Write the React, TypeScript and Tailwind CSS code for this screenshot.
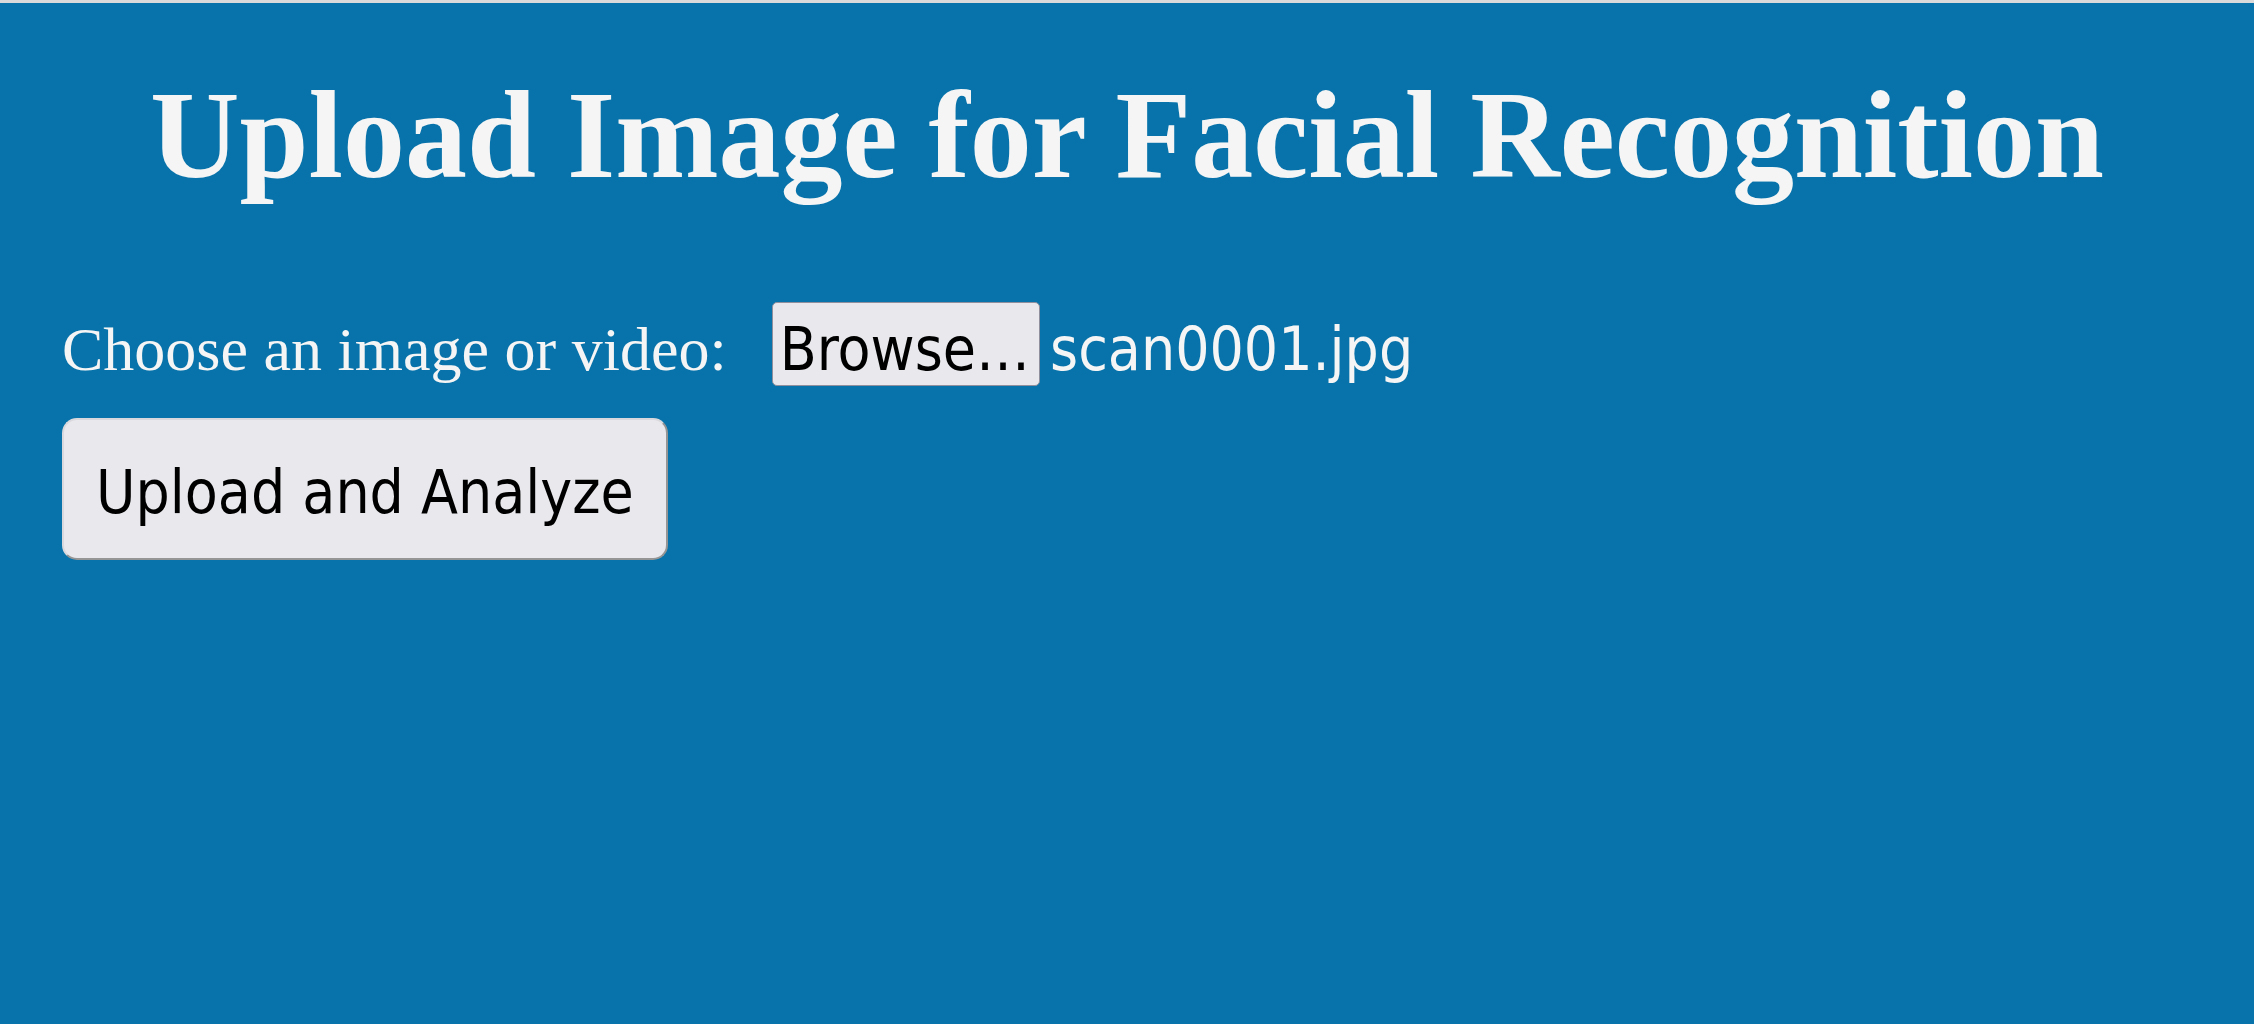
const UploadPage = () => {
  return (
    <div className="min-h-[1024px] w-full bg-[#0873aa]">
      <div className="h-[3px] bg-[#dadada]" />
      <h1 className="mt-[71px] text-center font-['Liberation_Serif',serif] text-[124px] font-bold leading-none text-[#f5f5f5]">
        Upload Image for Facial Recognition
      </h1>

      <form className="pl-[62px]" onSubmit={(e) => e.preventDefault()}>
        <div className="mt-[104px] flex items-baseline">
          <label className="font-['Liberation_Serif',serif] text-[62px] leading-none text-[#f5f5f5]">
            Choose an image or video:
          </label>
          <button
            type="button"
            className="ml-[45px] rounded-[5px] border border-[#8f8f9d] bg-[#e9e9ed] pl-[7px] pr-[9px] pt-[16px] pb-[6px] font-['DejaVu_Sans_Condensed','DejaVu_Sans',sans-serif] text-[60px] leading-none text-black"
          >
            Browse…
          </button>
          <span className="ml-[10px] font-['DejaVu_Sans_Condensed','DejaVu_Sans',sans-serif] text-[60px] leading-none text-[#f5f5f5]">
            scan0001.jpg
          </span>
        </div>

        <button
          type="submit"
          className="mt-[32px] rounded-[15px] border-2 border-t-[#d9d9dd] border-l-[#d9d9dd] border-r-[#959595] border-b-[#959595] bg-[#e9e8ed] px-[32px] pt-[42px] pb-[36px] font-['DejaVu_Sans_Condensed','DejaVu_Sans',sans-serif] text-[60px] leading-none text-black"
        >
          Upload and Analyze
        </button>
      </form>
    </div>
  );
};

export default UploadPage;
